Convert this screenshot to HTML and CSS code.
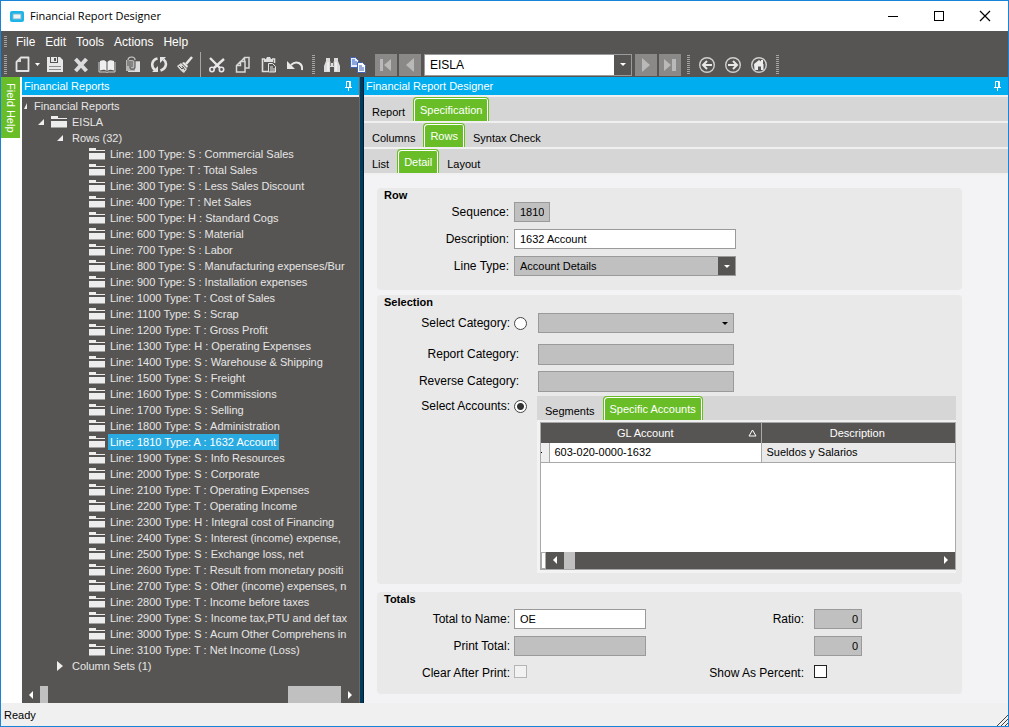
FILE: index.html
```html
<!DOCTYPE html>
<html lang="en">
<head>
<meta charset="utf-8">
<title>Financial Report Designer</title>
<link rel="stylesheet" href="styles.css">
</head>
<body>
<div class="window">
  <header class="titlebar">
    <svg class="app-icon" width="14" height="11" viewBox="0 0 14 11"><rect width="14" height="11" rx="2" fill="#1db4e8"/><rect x="3" y="3" width="8" height="5" fill="#f2f2f2" stroke="#79b9d2"/></svg>
    <h1 class="title">Financial Report Designer</h1>
    <div class="win-buttons">
      <button class="win-button" aria-label="Minimize"><svg width="12" height="12" viewBox="0 0 12 12"><path d="M1 6.500h10" stroke="#000"/></svg></button>
      <button class="win-button" aria-label="Maximize"><svg width="12" height="12" viewBox="0 0 12 12"><rect x="1.500" y="1.500" width="9" height="9" fill="none" stroke="#000"/></svg></button>
      <button class="win-button" aria-label="Close"><svg width="12" height="12" viewBox="0 0 12 12"><path d="M1 1l10 10M11 1L1 11" stroke="#000" stroke-width="1.200"/></svg></button>
    </div>
  </header>

  <nav class="menubar">
    <span class="grip grip-small"></span>
    <button class="menu">File</button><button class="menu">Edit</button><button class="menu">Tools</button><button class="menu">Actions</button><button class="menu">Help</button>
  </nav>

  <div class="toolbar">
    <span class="grip"></span>
    <button class="tool tool-new" aria-label="New">
      <svg width="30" height="18" viewBox="-4 0 30 18"><path d="M6 1.500h7.500v13.500H1.500V6z" fill="none" stroke="#e4e4e4" stroke-width="1.800" stroke-linejoin="round"/><path d="M6 1.500V6H1.500z" fill="#d8d8d8"/><path d="M20 7h5l-2.500 3z" fill="#fff"/></svg>
    </button>
    <button class="tool" aria-label="Save"><svg width="18" height="18" viewBox="0 0 18 18"><path d="M1 1h3v6h8V1h2l3 3v12H1z" fill="#e8e8e8"/><path d="M5 1h6v5H5z" fill="#e8e8e8"/><path d="M8 2h2v3H8z" fill="#575553"/><path d="M3 10.500h12M3 13.500h12" stroke="#8c8c8a"/></svg></button>
    <button class="tool" aria-label="Delete"><svg width="18" height="18" viewBox="0 0 18 18"><path d="M3.500 3l11 12M14.500 3l-11 12" stroke="#dcdcdc" stroke-width="4"/></svg></button>
    <button class="tool" aria-label="Book"><svg width="18" height="18" viewBox="0 0 18 18"><path d="M2 5c3-1 5-1 6.500 1v9C7 13.500 5 13.500 2 14.500zM16 5c-3-1-5-1-6.500 1v9c1.500-1.500 3.500-1.500 6.500-.5z" fill="#efefef"/><path d="M1 6v10h7l1 .5 1-.5h7V6" fill="none" stroke="#cfcfcf"/></svg></button>
    <button class="tool" aria-label="Attachments"><svg width="18" height="18" viewBox="0 0 18 18"><path d="M2 4h7l1 1h6v10H2z" fill="#b5b5b3"/><path d="M11 6h5v10H4v-1h7z" fill="#dedede"/><path d="M6 5v6c0 3 5 3 5 0V4c0-4-7-4-7 0v6" fill="none" stroke="#6a6866" stroke-width="1.300"/><path d="M8 5v6" stroke="#6a6866" stroke-width="1.200"/><path d="M4 4c0-4 7-4 7 0" fill="none" stroke="#c8c8c8" stroke-width="1.200"/></svg></button>
    <button class="tool" aria-label="Refresh"><svg width="18" height="18" viewBox="0 0 18 18"><path d="M7.500 2.500C1 4 1 11 5 14M10.500 14.500c6-2 7-8 3-11" fill="none" stroke="#e4e4e4" stroke-width="2.600"/><path d="M2 16h6v-6zM16 1h-6v6z" fill="#e4e4e4"/></svg></button>
    <button class="tool" aria-label="Clear"><svg width="18" height="18" viewBox="0 0 18 18"><path d="M16 1l-6 7" stroke="#e8e8e8" stroke-width="2.500"/><path d="M8 6l4 4-1 2-5-5z" fill="#e8e8e8"/><path d="M5 7l6 6-3 4C6 16 3 13 1 10z" fill="#d8d8d8"/><path d="M3 10l3 3 2-2M6 10l3 4" fill="none" stroke="#575553"/></svg></button>
    <span class="separator"></span>
    <button class="tool" aria-label="Cut"><svg width="18" height="18" viewBox="0 0 18 18"><path d="M2 2l10 10M16 3L6 12" stroke="#e8e8e8" stroke-width="2.400"/><circle cx="4" cy="13.500" r="2.200" fill="none" stroke="#e8e8e8" stroke-width="1.600"/><circle cx="13.500" cy="13.500" r="2.200" fill="none" stroke="#e8e8e8" stroke-width="1.600"/></svg></button>
    <button class="tool" aria-label="Copy"><svg width="18" height="18" viewBox="0 0 18 18"><path d="M7 5.500l3.500-4h4.500v10.500h-4M10.500 1.500V5" fill="none" stroke="#d8d8d8" stroke-width="1.500"/><path d="M6.500 5.500H11V16H2.500V9.500zM6.500 5.500v4h-4" fill="none" stroke="#d8d8d8" stroke-width="1.500"/></svg></button>
    <button class="tool" aria-label="Paste"><svg width="18" height="18" viewBox="0 0 18 18"><path d="M5 3H2.500v12.500H8M12 3h2.500v4" fill="none" stroke="#dedede" stroke-width="1.600"/><path d="M4 3h2l1-2h3l1 2h2v3H4z" fill="#dedede"/><path d="M8.500 7.500h4l3 3v5.500h-7z" fill="#575553" stroke="#e4e4e4"/><path d="M10 11h3M10 13h5M10 15h5" stroke="#e4e4e4"/></svg></button>
    <button class="tool" aria-label="Undo"><svg width="18" height="18" viewBox="0 0 18 18"><path d="M5 9c5-5 12-2 11 5" fill="none" stroke="#e8e8e8" stroke-width="2"/><path d="M1 5v8h8z" fill="#e8e8e8"/></svg></button>
    <span class="grip grip-mid"></span>
    <button class="tool" aria-label="Find"><svg width="18" height="18" viewBox="0 0 18 18"><path d="M3 2h4v3H3zM11 2h4v3h-4zM3 5h4l1 2h2l1-2h4l2 5v6h-6v-5H7v5H1v-6z" fill="#dcdcdc"/><path d="M5 6v9M13 6v9" stroke="#fff"/><path d="M7.500 6v4M10.500 6v4" stroke="#8c8a88"/></svg></button>
    <button class="tool" aria-label="Copy report"><svg width="18" height="18" viewBox="0 0 18 18"><path d="M1.500 1.500h5l3 3v7h-8z" fill="#e8f0ff" stroke="#4262b5"/><path d="M3 4h3M3 6h5M3 8h5" stroke="#315bb6"/><path d="M8.500 6.500h5l3 3v7h-8z" fill="#fff" stroke="#4262b5"/><path d="M10 10h3M10 12h5M10 14h5" stroke="#315bb6"/></svg></button>
    <div class="record-nav">
      <button class="nav-button" aria-label="First"><svg width="16" height="16" viewBox="0 0 16 16"><path d="M2 2h3v12H2zM13 2v12L6 8z" fill="#bab9b9"/></svg></button>
      <button class="nav-button" aria-label="Previous"><svg width="16" height="16" viewBox="0 0 16 16"><path d="M12 1v14L4 8z" fill="#bab9b9"/></svg></button>
      <span class="select-wrap record-select">
        <select class="select" aria-label="Report"><option>EISLA</option></select>
        <span class="select-arrow"></span>
      </span>
      <button class="nav-button" aria-label="Next"><svg width="16" height="16" viewBox="0 0 16 16"><path d="M4 1v14l8-7z" fill="#bab9b9"/></svg></button>
      <button class="nav-button" aria-label="Last"><svg width="16" height="16" viewBox="0 0 16 16"><path d="M2 2v12l7-6zM10 2h4v12h-4z" fill="#bab9b9"/></svg></button>
    </div>
    <span class="grip grip-mid"></span>
    <button class="tool" aria-label="Back"><svg width="18" height="18" viewBox="0 0 18 18"><circle cx="9" cy="9" r="7.300" fill="none" stroke="#d0d0d0" stroke-width="1.400"/><path d="M14 9H5M9 5L5 9l4 4" fill="none" stroke="#e8e8e8" stroke-width="2"/></svg></button>
    <button class="tool" aria-label="Forward"><svg width="18" height="18" viewBox="0 0 18 18"><circle cx="9" cy="9" r="7.300" fill="none" stroke="#d0d0d0" stroke-width="1.400"/><path d="M4 9h9M9 5l4 4-4 4" fill="none" stroke="#e8e8e8" stroke-width="2"/></svg></button>
    <button class="tool" aria-label="Home"><svg width="18" height="18" viewBox="0 0 18 18"><circle cx="9" cy="9" r="7.300" fill="none" stroke="#d0d0d0" stroke-width="1.400"/><path d="M4 8l5-4 2 1.500V4h2v4h.5v6H11v-3.500H8V14H4.500z" fill="#ececec"/></svg></button>
    <span class="grip grip-mid"></span>
  </div>

  <main class="workspace">
    <div class="dock"><button class="dock-tab">Field Help</button></div>

    <section class="panel tree-panel">
      <header class="panel-header"><h2 class="panel-title">Financial Reports</h2>
        <button class="pin" aria-label="Pin"><svg width="8" height="10" viewBox="0 0 8 10"><path d="M1.500 6V.5h4V6M4.500 0v6M0 6.500h7M3.500 7v3" fill="none" stroke="#fff"/></svg></button></header>
      <div class="tree-area">
        <ul class="tree">
          <li class="node level-0 open">Financial Reports</li>
          <li class="node level-1 open folder">EISLA</li>
          <li class="node level-2 open">Rows (32)</li>
          <li class="node leaf folder">Line: 100 Type: S : Commercial Sales</li>
          <li class="node leaf folder">Line: 200 Type: T : Total Sales</li>
          <li class="node leaf folder">Line: 300 Type: S : Less Sales Discount</li>
          <li class="node leaf folder">Line: 400 Type: T : Net Sales</li>
          <li class="node leaf folder">Line: 500 Type: H : Standard Cogs</li>
          <li class="node leaf folder">Line: 600 Type: S : Material</li>
          <li class="node leaf folder">Line: 700 Type: S : Labor</li>
          <li class="node leaf folder">Line: 800 Type: S : Manufacturing expenses/Bur</li>
          <li class="node leaf folder">Line: 900 Type: S : Installation expenses</li>
          <li class="node leaf folder">Line: 1000 Type: T : Cost of Sales</li>
          <li class="node leaf folder">Line: 1100 Type: S : Scrap</li>
          <li class="node leaf folder">Line: 1200 Type: T : Gross Profit</li>
          <li class="node leaf folder">Line: 1300 Type: H : Operating Expenses</li>
          <li class="node leaf folder">Line: 1400 Type: S : Warehouse &amp; Shipping</li>
          <li class="node leaf folder">Line: 1500 Type: S : Freight</li>
          <li class="node leaf folder">Line: 1600 Type: S : Commissions</li>
          <li class="node leaf folder">Line: 1700 Type: S : Selling</li>
          <li class="node leaf folder">Line: 1800 Type: S : Administration</li>
          <li class="node leaf folder"><span class="selected">Line: 1810 Type: A : 1632 Account</span></li>
          <li class="node leaf folder">Line: 1900 Type: S : Info Resources</li>
          <li class="node leaf folder">Line: 2000 Type: S : Corporate</li>
          <li class="node leaf folder">Line: 2100 Type: T : Operating Expenses</li>
          <li class="node leaf folder">Line: 2200 Type: T : Operating Income</li>
          <li class="node leaf folder">Line: 2300 Type: H : Integral cost of Financing</li>
          <li class="node leaf folder">Line: 2400 Type: S : Interest (income) expense,</li>
          <li class="node leaf folder">Line: 2500 Type: S : Exchange loss, net</li>
          <li class="node leaf folder">Line: 2600 Type: T : Result from monetary positi</li>
          <li class="node leaf folder">Line: 2700 Type: S : Other (income) expenses, n</li>
          <li class="node leaf folder">Line: 2800 Type: T : Income before taxes</li>
          <li class="node leaf folder">Line: 2900 Type: S : Income tax,PTU and def tax</li>
          <li class="node leaf folder">Line: 3000 Type: S : Acum Other Comprehens in</li>
          <li class="node leaf folder">Line: 3100 Type: T : Net Income (Loss)</li>
          <li class="node level-2 closed">Column Sets (1)</li>
        </ul>
        <div class="hscroll">
          <span class="arrow-box"><i class="arrow-left"></i></span><span class="thumb"></span><span class="track"></span><span class="thumb thumb-wide"></span><span class="arrow-box"><i class="arrow-right"></i></span>
        </div>
      </div>
    </section>

    <div class="splitter"></div>

    <section class="panel detail-panel">
      <header class="panel-header"><h2 class="panel-title">Financial Report Designer</h2>
        <button class="pin" aria-label="Pin"><svg width="8" height="10" viewBox="0 0 8 10"><path d="M1.500 6V.5h4V6M4.500 0v6M0 6.500h7M3.500 7v3" fill="none" stroke="#fff"/></svg></button></header>
      <div class="tabs"><button class="tab tab-first">Report</button><button class="tab active">Specification</button></div>
      <div class="tabs"><button class="tab tab-first">Columns</button><button class="tab active">Rows</button><button class="tab">Syntax Check</button></div>
      <div class="tabs"><button class="tab tab-first">List</button><button class="tab active">Detail</button><button class="tab">Layout</button></div>

      <form class="form">
        <fieldset class="group">
          <h3 class="group-title">Row</h3>
          <div class="row-grid">
            <label class="label" for="seq">Sequence:</label><input class="field field-seq disabled" id="seq" value="1810" readonly>
            <label class="label" for="desc">Description:</label><input class="field field-desc" id="desc" value="1632 Account">
            <label class="label" for="ltype">Line Type:</label>
            <span class="select-wrap line-type"><select class="select" id="ltype"><option>Account Details</option></select><span class="select-arrow"></span></span>
          </div>
        </fieldset>

        <fieldset class="group selection">
          <h3 class="group-title">Selection</h3>
          <div class="selection-grid">
            <label class="label" for="selcat">Select Category:</label><input class="radio" type="radio" name="mode" id="selcat">
            <span class="select-wrap category"><select class="select" aria-label="Category"><option></option></select><span class="select-arrow"></span></span>
            <label class="label label-wide" for="repcat">Report Category:</label><input class="field field-cat disabled" id="repcat" readonly>
            <label class="label label-wide" for="revcat">Reverse Category:</label><input class="field field-cat disabled" id="revcat" readonly>
            <label class="label" for="selacc">Select Accounts:</label><input class="radio" type="radio" name="mode" id="selacc" checked>
            <div class="accounts">
              <div class="tabs"><button type="button" class="tab tab-first">Segments</button><button type="button" class="tab active">Specific Accounts</button></div>
              <div class="grid-box">
                <table class="grid">
                  <colgroup><col class="col-mark"><col class="col-account"><col></colgroup>
                  <thead><tr><th colspan="2"><span class="sort-head"><span>GL Account</span><svg width="9" height="8" viewBox="0 0 9 8"><path d="M4.500 1L8 7H1z" fill="none" stroke="#fff"/></svg></span></th><th>Description</th></tr></thead>
                  <tbody><tr><td class="mark"></td><td class="cell-account">603-020-0000-1632</td><td class="cell-desc">Sueldos y Salarios</td></tr></tbody>
                </table>
                <div class="grid-space"></div>
                <div class="hscroll grid-scroll"><span class="split-box"></span><span class="arrow-box"><i class="arrow-left"></i></span><span class="thumb"></span><span class="track"></span><span class="arrow-box"><i class="arrow-right"></i></span></div>
              </div>
            </div>
          </div>
        </fieldset>

        <fieldset class="group totals">
          <h3 class="group-title">Totals</h3>
          <div class="totals-grid">
            <label class="label" for="tname">Total to Name:</label><input class="field field-total" id="tname" value="OE">
            <label class="label label-right" for="ratio">Ratio:</label><input class="field field-num disabled" id="ratio" value="0" readonly>
            <label class="label" for="ptotal">Print Total:</label><input class="field field-total disabled" id="ptotal" readonly>
            <span></span><input class="field field-num disabled" aria-label="Second ratio" value="0" readonly>
            <label class="label" for="clear">Clear After Print:</label><input class="check" type="checkbox" id="clear" disabled>
            <label class="label label-right" for="pct">Show As Percent:</label><input class="check" type="checkbox" id="pct">
          </div>
        </fieldset>
      </form>
    </section>
  </main>

  <footer class="status"><span>Ready</span><svg width="12" height="12" viewBox="0 0 12 12"><path d="M1 12L12 1M5 12l7-7M9 12l3-3" stroke="#444"/></svg></footer>
</div>
</body>
</html>
```
FILE: styles.css
```css
* { box-sizing: border-box; }
body { margin: 0; font: 11px/16px "Liberation Sans", Arial, sans-serif; color: #000; }
h1, h2, h3, ul { margin: 0; padding: 0; font-weight: normal; }
button, input, select { font: inherit; color: inherit; margin: 0; padding: 0; border: 0; border-radius: 0; background: none; }

.window { display: flex; flex-direction: column; min-height: 100vh; border: 1px solid #1883d7; background: #fff; }

.titlebar { display: flex; align-items: center; height: 30px; padding-left: 9px; }
.title { flex: 1; margin-left: 6px; font: 11px/16px "Open Sans", "Noto Sans", sans-serif; }
.win-buttons { display: flex; }
.win-button { display: grid; place-items: center; width: 46px; height: 28px; }

.menubar { display: flex; align-items: center; height: 21px; padding-left: 3px; background: #575553; color: #fff; font-size: 12px; }
.menu { margin-right: 10px; }
.grip { flex: none; width: 3px; height: 20px; margin-right: 2px; background: repeating-linear-gradient(#a5a5a3 0 1px, transparent 1px 2px); }
.grip-small { height: 12px; margin-right: 9px; }
.grip-mid { margin: 0 4px; }

.toolbar { display: flex; align-items: center; height: 25px; padding-left: 3px; background: #575553; }
.tool { display: grid; place-items: center; width: 26px; height: 24px; }
.tool-new { width: 33px; }
.separator { width: 1px; height: 25px; margin: 0 3px 0 2px; background: #a5a5a3; }
.record-nav { display: flex; gap: 2px; margin: 0 2px 0 4px; }
.nav-button { display: grid; place-items: center; width: 22px; height: 22px; background: #8b8888; }

.select-wrap { display: flex; position: relative; border: 1px solid #9a9a9a; }
.select { flex: 1; min-width: 0; appearance: none; padding-left: 5px; }
.select-arrow { display: grid; place-items: center; position: absolute; right: 0; top: 0; bottom: 0; width: 17px; background: #575553; color: #fff; pointer-events: none; }
.select-arrow::before { content: ""; border: 3px solid transparent; border-top-color: currentColor; border-bottom: 0; }
.record-select { width: 208px; height: 22px; margin: 0 1px; background: #fff; font-size: 12px; }

.workspace { flex: 1; display: flex; min-height: 0; }
.dock { width: 21px; padding-right: 2px; }
.dock-tab { width: 19px; height: 61px; background: #69be28; color: #fff; writing-mode: vertical-rl; line-height: 19px; }

.panel { display: flex; flex-direction: column; min-width: 0; }
.panel-header { display: flex; align-items: center; justify-content: space-between; height: 20px; padding: 0 6px 0 2px; background: #00adef; color: #fff; border-bottom: 2px solid #f0f0f0; }
.panel-title { font-size: 11px; }
.pin { display: flex; }
.tree-panel { width: 337px; }
.tree-area { flex: 1; display: flex; flex-direction: column; padding-top: 1px; background: #575553; color: #e6e6e6; overflow: hidden; }
.tree { flex: 1; list-style: none; }
.node { display: flex; align-items: center; height: 16px; white-space: nowrap; }
.level-0 { padding-left: 2px; }
.level-1 { padding-left: 16px; }
.level-2 { padding-left: 35px; }
.leaf { padding-left: 67px; }
.open::before { content: ""; width: 6px; height: 6px; margin-right: 9px; background: #eee; clip-path: polygon(100% 0, 100% 100%, 0 100%); }
.level-0.open::before { width: 3px; margin-right: 7px; }
.level-1.open::before { margin-right: 7px; }
.closed::before { content: ""; margin-right: 9px; border: 5px solid transparent; border-left: 6px solid #eee; border-right: 0; }
.folder::before { flex: none; }
.leaf::before, .level-1::after { content: ""; width: 16px; height: 12px; }
.leaf::before { margin-right: 5px; }
.leaf::before, .level-1::after {
  background:
    linear-gradient(#ededed, #ededed) 0 0 / 7px 3px no-repeat,
    linear-gradient(#ededed, #ededed) 0 2px / 16px 1px no-repeat,
    linear-gradient(#a0a09e, #a0a09e) 0 11px / 16px 1px no-repeat,
    linear-gradient(#ededed, #ededed) 0 5px / 16px 6px no-repeat;
}
.level-1::before { order: -2; }
.level-1::after { order: -1; margin-right: 5px; }
.selected { margin-left: -2px; padding: 0 3px 0 2px; background: #29abe2; color: #fff; }

.hscroll { display: flex; height: 17px; background: #575553; }
.arrow-box { display: grid; place-items: center; width: 18px; }
.arrow-left, .arrow-right { border: 4px solid transparent; }
.arrow-left { border-right-color: #fff; border-left: 0; }
.arrow-right { border-left-color: #fff; border-right: 0; }
.thumb { width: 8px; background: #c0c0c0; }
.thumb-wide { width: 53px; }
.track { flex: 1; }

.splitter { width: 5px; background: #003a5c; border-left: 1px solid #6b6967; border-right: 1px solid #001c30; }

.detail-panel { flex: 1; background: #f3f3f6; }
.tabs { display: flex; align-items: flex-end; height: 26px; background: #d6d6d6; border-bottom: 2px solid #f0f0f0; }
.tab { height: 22px; padding: 3px 8px 0; line-height: 16px; }
.active { height: 24px; padding: 0 6px; border: 1px solid #69be28; border-bottom: 0; border-radius: 4px 4px 0 0; background: #69be28; box-shadow: inset 1px 1px #fff, inset -1px 0 #fff; color: #fff; }

.form { padding: 13px 46px 8px 13px; }
.group { min-width: 0; margin: 0 0 5px; padding: 0 7px 14px; border: 0; border-radius: 4px; background: #e9e9e9; }
.group-title { height: 14px; font: bold 11px/14px "Liberation Sans", Arial, sans-serif; }
.label { font-size: 12px; line-height: 20px; text-align: right; white-space: nowrap; }
.field { height: 20px; padding: 0 5px; border: 1px solid #9a9a9a; background: #fff; }
.disabled { background: #c0c0c0; }

.row-grid { display: grid; grid-template-columns: 125px 1fr; gap: 7px 5px; }
.field-seq { width: 36px; }
.field-desc, .line-type { width: 222px; height: 20px; }
.line-type { background: #c0c0c0; }

.selection { margin-bottom: 8px; padding-bottom: 11px; padding-right: 6px; }
.selection .group-title { height: 18px; }
.selection-grid { display: grid; grid-template-columns: 126px 14px 1fr; grid-template-rows: 27px 23px 21px auto; gap: 4px; align-items: start; }
.label-wide { grid-column: 1 / 3; padding-right: 9px; }
.category { width: 196px; height: 20px; margin-left: 6px; background: #c0c0c0; }
.category .select-arrow { background: none; color: #000; }
.field-cat { width: 196px; height: 21px; margin-left: 6px; }
.radio { appearance: none; width: 13px; height: 13px; margin-top: 4px; border: 1px solid #444; border-radius: 50%; background: #fff; }
.radio:checked { background: radial-gradient(circle, #333 0 3px, #fff 4px); }
.accounts { margin-left: 5px; padding-bottom: 3px; background: #f3f3f3; }
.grid-box { margin-left: 3px; border: 1px solid #a9a9a9; background: #fff; }
.grid { width: 100%; table-layout: fixed; border-collapse: collapse; }
.col-mark { width: 8px; }
.col-account { width: 212px; }
.grid th { height: 20px; padding: 0 4px 0 2px; background: #575553; color: #fff; font-weight: normal; }
.grid th + th, .grid td + td { border-left: 1px solid #a9a9a9; }
.sort-head { display: flex; align-items: center; }
.sort-head span { flex: 1; }
.grid td { height: 19px; padding: 0 5px; border-bottom: 1px solid #a9a9a9; }
.grid .mark { padding: 0; background: linear-gradient(#000, #000) 0 9px / 1px 1px no-repeat #efefef; }
.grid .cell-desc { background: #e9e9e9; }
.grid-space { height: 89px; }
.split-box { width: 5px; border: 1px solid #a9a9a9; background: #fff; }
.grid-scroll .thumb { width: 11px; }

.totals { margin-bottom: 0; padding-bottom: 11px; }
.totals .group-title { height: 17px; }
.totals-grid { display: grid; grid-template-columns: 126px 1fr 110px 141px; gap: 7px 4px; align-items: start; }
.label-right { padding-right: 6px; }
.field-total { width: 132px; }
.field-num { width: 48px; padding-right: 3px; text-align: right; }
.check { appearance: none; width: 13px; height: 13px; margin-top: 2px; border: 1px solid #222; background: #fff; }
.check:disabled { border-color: #b5b5b5; background: #f2f2f2; }

.status { display: flex; align-items: flex-end; justify-content: space-between; height: 23px; padding-left: 3px; background: #f0f0f0; }
.status span { padding-bottom: 3px; }
```
